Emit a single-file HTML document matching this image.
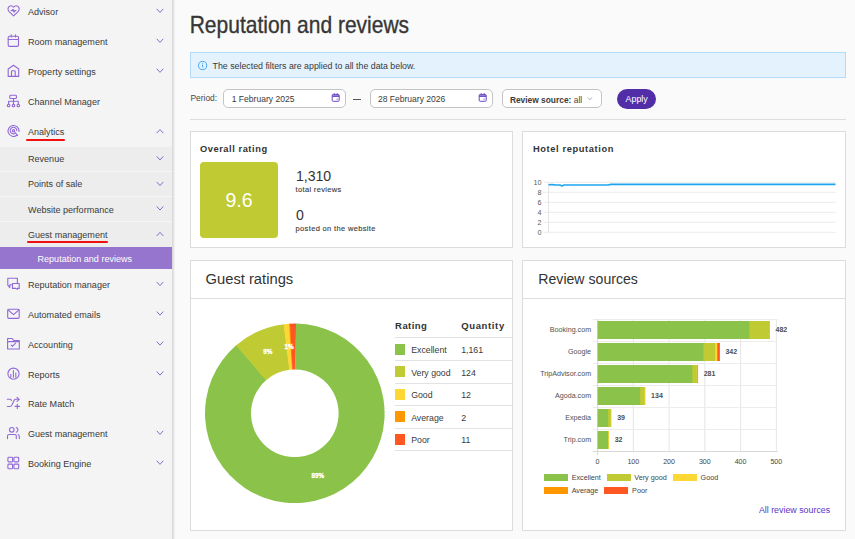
<!DOCTYPE html>
<html><head><meta charset="utf-8">
<style>
*{box-sizing:border-box;margin:0;padding:0}
html,body{width:855px;height:539px;overflow:hidden;background:#fafafa;font-family:"Liberation Sans",sans-serif}
.a{position:absolute}
.t{position:absolute;white-space:pre}
svg{overflow:visible}
text{font-family:"Liberation Sans",sans-serif;white-space:pre}
</style></head><body>
<div class="a" style="left:0px;top:0px;width:172px;height:539px;background:#f4f4f4;"></div>
<div class="a" style="left:172px;top:0px;width:3px;height:539px;background:linear-gradient(to right,#d4d4d4,#e8e8e8 60%,#f6f6f6);"></div>
<div class="a" style="left:0px;top:147px;width:172px;height:100px;background:#ededed;"></div>
<div class="a" style="left:0px;top:171px;width:172px;height:1px;background:#f6f6f6;"></div>
<div class="a" style="left:0px;top:196px;width:172px;height:1px;background:#f6f6f6;"></div>
<div class="a" style="left:0px;top:221px;width:172px;height:1px;background:#f6f6f6;"></div>
<div class="a" style="left:0px;top:247px;width:172px;height:22px;background:#9575cd;"></div>
<svg class="a" style="left:0;top:0" width="172" height="539" fill="none" stroke="#9068d8" stroke-width="1.1" stroke-linecap="round" stroke-linejoin="round">
<path d="M13.6 15.9 L9.1 11.6 C7.7 10.2 7.6 7.9 9 6.6 C10.4 5.5 12.4 5.7 13.6 7.1 C14.8 5.7 16.8 5.5 18.2 6.6 C19.6 7.9 19.5 10.2 18.1 11.6 Z"/>
<path d="M11.2 10.6 H12.3 L13.1 9.4 L14 12.1 L14.8 10.6 H15.9" stroke-width="1.2"/>
<rect x="8.2" y="36.3" width="10.3" height="10.1" rx="1.3"/><path d="M8.2 39.5 H18.5 M11.2 34.8 V37 M15.5 34.8 V37"/>
<path d="M8.2 76.4 V69 L13.5 65.3 L18.7 69 V76.4 Z"/><path d="M11.5 76.4 V71.6 Q11.5 70.7 12.4 70.7 H14.3 Q15.2 70.7 15.2 71.6 V76.4"/>
<rect x="9.8" y="95.3" width="6.6" height="3.2" rx="0.8"/><path d="M13.5 98.5 V101.3 M8.6 104.2 V101.3 H18.3 V104.2 M13.5 101.3 V104.2"/>
<circle cx="8.6" cy="105.5" r="1.3"/><circle cx="13.5" cy="105.5" r="1.3"/><circle cx="18.3" cy="105.5" r="1.3"/>
<path d="M16.9 135.3 A5.5 5.5 0 1 1 19 131.5"/><path d="M14.8 133.6 A3.3 3.3 0 1 1 16.8 130.6"/><circle cx="13.5" cy="130.7" r="1.1"/><path d="M14.2 131.5 L17.6 135.3"/>
<path d="M7.8 278.3 H17.4 V283.4 M11.9 284.7 H9.8 V287.6 L7.8 285.2 V278.3"/>
<path d="M12.5 283.5 H19.2 V288.4 H17.4 V289.4 L15.9 288.4 H12.5 Z"/>
<rect x="7.7" y="309.3" width="11.5" height="9.1" rx="1.2"/><path d="M8 309.8 L13.5 314.6 L19 309.8"/>
<path d="M7.6 349 V338.5 H12.2 L13.6 340.5 H19.3 V349 Z M7.6 341.6 H19.3"/><path d="M11.2 345.1 L12.4 346.4 L15.6 343.2"/>
<circle cx="13.5" cy="373.7" r="5.6"/><path d="M10.8 374.4 V377.2 M13.4 370.6 V377.2 M15.8 373 V377.2"/>
<path d="M7.3 399.3 H10 Q10.9 399.3 11.5 400.4 M7.3 406.5 H10 Q11.1 406.5 11.9 405 L14.1 400.4 Q14.6 399.3 15.6 399.3 H19.2 M17 397.3 L19.2 399.3 L17 401.3"/><path d="M17.3 404.2 V408.6 M15.1 406.4 H19.5"/>
<circle cx="11.8" cy="429.8" r="2.3"/><path d="M7.5 438.6 V436 Q7.5 434.5 9 434.5 H14.8 Q16.3 434.5 16.3 436 V438.6 M16.3 427.5 A2.5 2.5 0 0 1 16.3 432.2 M18.1 434.4 Q19.3 435.3 19.3 436.5 V438.6"/>
<rect x="7.9" y="457.3" width="4.7" height="4.6" rx="0.9"/><rect x="13.9" y="457.3" width="4.8" height="4.6" rx="0.9"/><rect x="7.9" y="464.1" width="4.7" height="4.7" rx="0.9"/><rect x="13.9" y="464.1" width="4.8" height="4.7" rx="0.9"/>
</svg>
<div class="a" style="left:25.5px;top:138.5px;width:39px;height:2px;background:#f01010;border-radius:1px"></div>
<div class="a" style="left:26.7px;top:240.8px;width:81.7px;height:2px;background:#f01010;border-radius:1px"></div>
<svg class="a" style="left:0;top:0" width="172" height="539"><path d="M157.0 9.15 L160 12.450000000000001 L163.0 9.15" fill="none" stroke="#8a68d0" stroke-width="1.0" stroke-linecap="round" stroke-linejoin="round"/><path d="M157.0 39.15 L160 42.449999999999996 L163.0 39.15" fill="none" stroke="#8a68d0" stroke-width="1.0" stroke-linecap="round" stroke-linejoin="round"/><path d="M157.0 69.05 L160 72.35000000000001 L163.0 69.05" fill="none" stroke="#8a68d0" stroke-width="1.0" stroke-linecap="round" stroke-linejoin="round"/><path d="M157.0 132.85 L160 129.54999999999998 L163.0 132.85" fill="none" stroke="#8a68d0" stroke-width="1.0" stroke-linecap="round" stroke-linejoin="round"/><path d="M157.0 156.65 L160 159.95000000000002 L163.0 156.65" fill="none" stroke="#8a68d0" stroke-width="1.0" stroke-linecap="round" stroke-linejoin="round"/><path d="M157.0 182.25 L160 185.55 L163.0 182.25" fill="none" stroke="#8a68d0" stroke-width="1.0" stroke-linecap="round" stroke-linejoin="round"/><path d="M157.0 206.75 L160 210.05 L163.0 206.75" fill="none" stroke="#8a68d0" stroke-width="1.0" stroke-linecap="round" stroke-linejoin="round"/><path d="M157.0 235.65 L160 232.35 L163.0 235.65" fill="none" stroke="#8a68d0" stroke-width="1.0" stroke-linecap="round" stroke-linejoin="round"/><path d="M157.0 282.25 L160 285.54999999999995 L163.0 282.25" fill="none" stroke="#8a68d0" stroke-width="1.0" stroke-linecap="round" stroke-linejoin="round"/><path d="M157.0 311.85 L160 315.15 L163.0 311.85" fill="none" stroke="#8a68d0" stroke-width="1.0" stroke-linecap="round" stroke-linejoin="round"/><path d="M157.0 341.85 L160 345.15 L163.0 341.85" fill="none" stroke="#8a68d0" stroke-width="1.0" stroke-linecap="round" stroke-linejoin="round"/><path d="M157.0 371.85 L160 375.15 L163.0 371.85" fill="none" stroke="#8a68d0" stroke-width="1.0" stroke-linecap="round" stroke-linejoin="round"/><path d="M157.0 431.15000000000003 L160 434.45 L163.0 431.15000000000003" fill="none" stroke="#8a68d0" stroke-width="1.0" stroke-linecap="round" stroke-linejoin="round"/><path d="M157.0 461.05 L160 464.34999999999997 L163.0 461.05" fill="none" stroke="#8a68d0" stroke-width="1.0" stroke-linecap="round" stroke-linejoin="round"/></svg>
<div class="a" style="left:190px;top:52px;width:656px;height:26px;background:#e3f2fd;border:1px solid #b3dbf7;"></div>
<svg class="a" style="left:197px;top:60px" width="11" height="11" viewBox="0 0 11 11"><circle cx="5.6" cy="5.5" r="4.1" fill="none" stroke="#45a6f3" stroke-width="1"/><path d="M5.6 4.6v2.8" stroke="#45a6f3" stroke-width="1"/><circle cx="5.6" cy="3.3" r=".5" fill="#45a6f3"/></svg>
<div class="a" style="left:223px;top:89px;width:123px;height:19px;background:#fff;border:1px solid #c4c4c4;border-radius:5px;"></div>
<div class="a" style="left:370px;top:89px;width:123px;height:19px;background:#fff;border:1px solid #c4c4c4;border-radius:5px;"></div>
<svg class="a" style="left:331.2px;top:93.2px" width="9" height="9" viewBox="0 0 9 9" fill="none" stroke="#6240c0" stroke-width="0.95"><rect x="1.2" y="1.4" width="7" height="6.9" rx="1"/><path d="M1.2 3.1h7" stroke-width="1.6"/><path d="M3.2 .2v1.6M6.2 .2v1.6" stroke-width="0.9"/><circle cx="6.1" cy="6.1" r=".6" fill="#6240c0" stroke="none"/></svg>
<svg class="a" style="left:478.2px;top:93.2px" width="9" height="9" viewBox="0 0 9 9" fill="none" stroke="#6240c0" stroke-width="0.95"><rect x="1.2" y="1.4" width="7" height="6.9" rx="1"/><path d="M1.2 3.1h7" stroke-width="1.6"/><path d="M3.2 .2v1.6M6.2 .2v1.6" stroke-width="0.9"/><circle cx="6.1" cy="6.1" r=".6" fill="#6240c0" stroke="none"/></svg>
<div class="a" style="left:353px;top:98.5px;width:8px;height:1px;background:#555;"></div>
<div class="a" style="left:502px;top:89px;width:100px;height:19px;background:#fff;border:1px solid #c4c4c4;border-radius:5px;"></div>
<svg class="a" style="left:586px;top:96px" width="8" height="5" viewBox="0 0 8 5"><path d="M1.6 1.5 L3.9 3.6 L6.2 1.5" fill="none" stroke="#a0a0a0" stroke-width="0.85"/></svg>
<div class="a" style="left:617px;top:89px;width:39px;height:20px;background:#512da8;border-radius:10px;"></div>
<div class="a" style="left:190px;top:119px;width:656px;height:1px;background:#dedede;"></div>
<div class="a" style="left:190px;top:131px;width:323px;height:117px;background:#fff;border:1px solid #dcdcdc;"></div>
<div class="a" style="left:522px;top:131px;width:324px;height:117px;background:#fff;border:1px solid #dcdcdc;"></div>
<div class="a" style="left:190px;top:260px;width:323px;height:271px;background:#fff;border:1px solid #dcdcdc;"></div>
<div class="a" style="left:522px;top:260px;width:324px;height:271px;background:#fff;border:1px solid #dcdcdc;"></div>
<div class="a" style="left:200px;top:162px;width:78px;height:76px;background:#c0ca33;border-radius:4px;"></div>
<svg class="a" style="left:522px;top:131px" width="324" height="117"><path d="M21.5 51.30000000000001 H313.5" stroke="#ebebeb" stroke-width="1"/><path d="M21.5 61.30000000000001 H313.5" stroke="#ebebeb" stroke-width="1"/><path d="M21.5 71.30000000000001 H313.5" stroke="#ebebeb" stroke-width="1"/><path d="M21.5 81.30000000000001 H313.5" stroke="#ebebeb" stroke-width="1"/><path d="M21.5 91.30000000000001 H313.5" stroke="#ebebeb" stroke-width="1"/><path d="M21.5 101.30000000000001 H313.5" stroke="#ebebeb" stroke-width="1"/><path d="M26.5 51.30000000000001 V101.80000000000001" stroke="#e4e4e4" stroke-width="1"/><path d="M26.5 53.80000000000001 L30 53.599999999999994 L34 54.0 L38 54.0 L40 54.900000000000006 L42 54.0 L86 54.0 L89 53.400000000000006 L313.5 53.400000000000006" fill="none" stroke="#1fa5ef" stroke-width="1.6" stroke-linejoin="round"/></svg>
<div class="a" style="left:191px;top:298px;width:321px;height:1px;background:#dedede;"></div>
<div class="a" style="left:523px;top:298px;width:322px;height:1px;background:#dedede;"></div>
<svg class="a" style="left:190px;top:260px" width="323" height="271"><path d="M106.05 63.51 A89.8 89.8 0 1 1 46.48 85.02 L76.35 119.99 A43.8 43.8 0 1 0 105.41 109.50Z" fill="#8bc34a"/><path d="M46.00 85.42 A89.8 89.8 0 0 1 94.17 64.13 L99.61 109.81 A43.8 43.8 0 0 0 76.12 120.19Z" fill="#c0ca33"/><path d="M93.55 64.21 A89.8 89.8 0 0 1 99.63 63.65 L102.28 109.57 A43.8 43.8 0 0 0 99.31 109.85Z" fill="#fdd835"/><path d="M99.00 63.69 A89.8 89.8 0 0 1 100.57 63.60 L102.74 109.55 A43.8 43.8 0 0 0 101.97 109.59Z" fill="#ff9800"/><path d="M99.94 63.63 A89.8 89.8 0 0 1 106.05 63.51 L105.41 109.50 A43.8 43.8 0 0 0 102.43 109.56Z" fill="#ff5722"/></svg>
<div class="a" style="left:394.8px;top:337.2px;width:117.2px;height:1px;background:#e2e2e2;"></div>
<div class="a" style="left:394.8px;top:360.1px;width:117.2px;height:1px;background:#e2e2e2;"></div>
<div class="a" style="left:394.8px;top:382.6px;width:117.2px;height:1px;background:#e2e2e2;"></div>
<div class="a" style="left:394.8px;top:405.0px;width:117.2px;height:1px;background:#e2e2e2;"></div>
<div class="a" style="left:394.8px;top:427.7px;width:117.2px;height:1px;background:#e2e2e2;"></div>
<div class="a" style="left:394.8px;top:450.1px;width:117.2px;height:1px;background:#e2e2e2;"></div>
<div class="a" style="left:395px;top:344px;width:10px;height:11px;background:#8bc34a;"></div>
<div class="a" style="left:395px;top:366px;width:10px;height:11px;background:#c0ca33;"></div>
<div class="a" style="left:395px;top:389px;width:10px;height:11px;background:#fdd835;"></div>
<div class="a" style="left:395px;top:411px;width:10px;height:11px;background:#ff9800;"></div>
<div class="a" style="left:395px;top:434px;width:10px;height:11px;background:#ff5722;"></div>
<svg class="a" style="left:522px;top:260px" width="324" height="271"><path d="M111.35 59.5 V191.5" stroke="#e6e6e6" stroke-width="1"/><path d="M147.10 59.5 V191.5" stroke="#e6e6e6" stroke-width="1"/><path d="M182.85 59.5 V191.5" stroke="#e6e6e6" stroke-width="1"/><path d="M218.60 59.5 V191.5" stroke="#e6e6e6" stroke-width="1"/><path d="M254.35 59.5 V191.5" stroke="#e6e6e6" stroke-width="1"/><path d="M70.79999999999995 59.50 H255.5" stroke="#ececec" stroke-width="1"/><path d="M70.79999999999995 81.50 H255.5" stroke="#ececec" stroke-width="1"/><path d="M70.79999999999995 103.50 H255.5" stroke="#ececec" stroke-width="1"/><path d="M70.79999999999995 125.50 H255.5" stroke="#ececec" stroke-width="1"/><path d="M70.79999999999995 147.50 H255.5" stroke="#ececec" stroke-width="1"/><path d="M70.79999999999995 169.50 H255.5" stroke="#ececec" stroke-width="1"/><path d="M70.79999999999995 191.50 H255.5" stroke="#ececec" stroke-width="1"/><path d="M70.79999999999995 191.5 H255.5" stroke="#d8d8d8" stroke-width="1"/><path d="M75.60000000000002 59.5 V195" stroke="#d8d8d8" stroke-width="1"/><rect x="226.39" y="61.00" width="21.52" height="18.0" fill="#c0ca33"/><rect x="75.60" y="61.00" width="151.79" height="18.0" fill="#8bc34a"/><rect x="194.72" y="83.00" width="3.14" height="18.0" fill="#ff5722"/><rect x="194.00" y="83.00" width="1.72" height="18.0" fill="#ff9800"/><rect x="192.22" y="83.00" width="2.79" height="18.0" fill="#fdd835"/><rect x="180.42" y="83.00" width="12.80" height="18.0" fill="#c0ca33"/><rect x="75.60" y="83.00" width="105.82" height="18.0" fill="#8bc34a"/><rect x="174.52" y="105.00" width="1.54" height="18.0" fill="#ff5722"/><rect x="173.81" y="105.00" width="1.72" height="18.0" fill="#fdd835"/><rect x="169.34" y="105.00" width="5.47" height="18.0" fill="#c0ca33"/><rect x="75.60" y="105.00" width="94.74" height="18.0" fill="#8bc34a"/><rect x="121.61" y="127.00" width="1.89" height="18.0" fill="#fdd835"/><rect x="117.14" y="127.00" width="5.47" height="18.0" fill="#c0ca33"/><rect x="75.60" y="127.00" width="42.54" height="18.0" fill="#8bc34a"/><rect x="87.83" y="149.00" width="1.71" height="18.0" fill="#fdd835"/><rect x="85.15" y="149.00" width="3.68" height="18.0" fill="#c0ca33"/><rect x="75.60" y="149.00" width="10.55" height="18.0" fill="#8bc34a"/><rect x="85.25" y="171.00" width="1.79" height="18.0" fill="#fdd835"/><rect x="75.60" y="171.00" width="10.65" height="18.0" fill="#8bc34a"/></svg>
<div class="a" style="left:543.9px;top:474.3px;width:24px;height:7.2px;background:#8bc34a;"></div>
<div class="a" style="left:606.8px;top:474.3px;width:24px;height:7.2px;background:#c0ca33;"></div>
<div class="a" style="left:672.8px;top:474.3px;width:24px;height:7.2px;background:#fdd835;"></div>
<div class="a" style="left:543.9px;top:487.2px;width:24px;height:7.2px;background:#ff9800;"></div>
<div class="a" style="left:604.3px;top:487.2px;width:24px;height:7.2px;background:#ff5722;"></div>
<svg class="a" style="left:0;top:0" width="855" height="539">
<text x="28.00" y="15.20" font-size="9.05" fill="#3a3a3a" style="">Advisor</text>
<text x="28.00" y="44.80" font-size="9.05" fill="#3a3a3a" style="">Room management</text>
<text x="28.00" y="74.50" font-size="9.05" fill="#3a3a3a" style="">Property settings</text>
<text x="28.00" y="104.60" font-size="9.05" fill="#3a3a3a" style="">Channel Manager</text>
<text x="28.00" y="134.90" font-size="9.05" fill="#3a3a3a" style="">Analytics</text>
<text x="28.00" y="288.10" font-size="9.05" fill="#3a3a3a" style="">Reputation manager</text>
<text x="28.00" y="318.30" font-size="9.05" fill="#3a3a3a" style="">Automated emails</text>
<text x="28.00" y="348.40" font-size="9.05" fill="#3a3a3a" style="">Accounting</text>
<text x="28.00" y="378.10" font-size="9.05" fill="#3a3a3a" style="">Reports</text>
<text x="28.00" y="406.90" font-size="9.05" fill="#3a3a3a" style="">Rate Match</text>
<text x="28.00" y="436.80" font-size="9.05" fill="#3a3a3a" style="">Guest management</text>
<text x="28.00" y="467.00" font-size="9.05" fill="#3a3a3a" style="">Booking Engine</text>
<text x="28.00" y="161.70" font-size="9.05" fill="#3a3a3a" style="">Revenue</text>
<text x="28.00" y="186.70" font-size="9.05" fill="#3a3a3a" style="">Points of sale</text>
<text x="28.00" y="212.90" font-size="9.05" fill="#3a3a3a" style="">Website performance</text>
<text x="28.00" y="238.00" font-size="9.05" fill="#3a3a3a" style="">Guest management</text>
<text x="37.50" y="261.70" font-size="9.05" fill="#ffffff" style="">Reputation and reviews</text>
<text transform="translate(189.70 0) scale(0.8900 1) translate(-189.70 0)" x="189.70" y="33.10" font-size="23.6" fill="#363636" style="stroke:#363636;stroke-width:0.35px">Reputation and reviews</text>
<text x="212.50" y="68.80" font-size="8.82" fill="#3a3a3a" style="">The selected filters are applied to all the data below.</text>
<text x="190.40" y="101.30" font-size="8.46" fill="#484848" style="">Period:</text>
<text x="231.70" y="101.90" font-size="8.55" fill="#3a3a3a" style="">1 February 2025</text>
<text x="377.90" y="101.60" font-size="8.55" fill="#3a3a3a" style="">28 February 2026</text>
<text x="509.90" y="102.90" font-size="8.4" fill="#3a3a3a" font-weight="700" style="">Review source:</text>
<text x="573.80" y="102.90" font-size="8.4" fill="#444" style="">all</text>
<text x="625.60" y="101.90" font-size="8.83" fill="#fff" style="">Apply</text>
<text x="199.90" y="152.00" font-size="9.3" fill="#333" font-weight="700" style=";letter-spacing:0.557px">Overall rating</text>
<text x="239.00" y="207.10" font-size="19.5" fill="#fff" text-anchor="middle" style="">9.6</text>
<text x="295.90" y="180.50" font-size="14.1" fill="#333" style="">1,310</text>
<text x="295.60" y="191.90" font-size="7.5" fill="#3c3c3c" style="stroke:#3c3c3c;stroke-width:0.12px;letter-spacing:0.326px">total reviews</text>
<text x="295.90" y="219.60" font-size="14.1" fill="#333" style="">0</text>
<text x="295.60" y="230.50" font-size="7.5" fill="#3c3c3c" style="stroke:#3c3c3c;stroke-width:0.12px;letter-spacing:0.342px">posted on the website</text>
<text x="533.00" y="151.90" font-size="9.3" fill="#333" font-weight="700" style=";letter-spacing:0.613px">Hotel reputation</text>
<text x="541.60" y="184.90" font-size="7.2" fill="#5a5a5a" text-anchor="end" style="">10</text>
<text x="541.60" y="194.90" font-size="7.2" fill="#5a5a5a" text-anchor="end" style="">8</text>
<text x="541.60" y="204.90" font-size="7.2" fill="#5a5a5a" text-anchor="end" style="">6</text>
<text x="541.60" y="214.90" font-size="7.2" fill="#5a5a5a" text-anchor="end" style="">4</text>
<text x="541.60" y="224.90" font-size="7.2" fill="#5a5a5a" text-anchor="end" style="">2</text>
<text x="541.60" y="234.90" font-size="7.2" fill="#5a5a5a" text-anchor="end" style="">0</text>
<text x="205.50" y="283.80" font-size="14.75" fill="#333" style="">Guest ratings</text>
<text x="538.30" y="283.80" font-size="14.12" fill="#333" style="">Review sources</text>
<text x="317.80" y="477.80" font-size="6.3" fill="#fff" font-weight="700" text-anchor="middle" style="stroke:#fff;stroke-width:0.35px">89%</text>
<text x="267.90" y="354.20" font-size="6.3" fill="#fff" font-weight="700" text-anchor="middle" style="stroke:#fff;stroke-width:0.35px">9%</text>
<text x="289.00" y="349.20" font-size="6.3" fill="#fff" font-weight="700" text-anchor="middle" style="stroke:#fff;stroke-width:0.35px">1%</text>
<text x="395.10" y="329.20" font-size="9.5" fill="#333" font-weight="700" style=";letter-spacing:0.429px">Rating</text>
<text x="461.20" y="329.20" font-size="9.5" fill="#333" font-weight="700" style=";letter-spacing:0.639px">Quantity</text>
<text x="411.20" y="353.15" font-size="8.75" fill="#3a3a3a" style="">Excellent</text>
<text x="461.20" y="353.15" font-size="8.75" fill="#3a3a3a" style="">1,161</text>
<text x="411.20" y="375.85" font-size="8.75" fill="#3a3a3a" style="">Very good</text>
<text x="461.20" y="375.85" font-size="8.75" fill="#3a3a3a" style="">124</text>
<text x="411.20" y="398.30" font-size="8.75" fill="#3a3a3a" style="">Good</text>
<text x="461.20" y="398.30" font-size="8.75" fill="#3a3a3a" style="">12</text>
<text x="411.20" y="420.85" font-size="8.75" fill="#3a3a3a" style="">Average</text>
<text x="461.20" y="420.85" font-size="8.75" fill="#3a3a3a" style="">2</text>
<text x="411.20" y="443.40" font-size="8.75" fill="#3a3a3a" style="">Poor</text>
<text x="461.20" y="443.40" font-size="8.75" fill="#3a3a3a" style="">11</text>
<text x="591.10" y="332.30" font-size="7.15" fill="#505050" text-anchor="end" style="">Booking.com</text>
<text x="775.51" y="332.30" font-size="7.0" fill="#4d4d4d" font-weight="700" style="">482</text>
<text x="591.10" y="354.30" font-size="7.15" fill="#505050" text-anchor="end" style="">Google</text>
<text x="725.47" y="354.30" font-size="7.0" fill="#4d4d4d" font-weight="700" style="">342</text>
<text x="591.10" y="376.30" font-size="7.15" fill="#505050" text-anchor="end" style="">TripAdvisor.com</text>
<text x="703.66" y="376.30" font-size="7.0" fill="#4d4d4d" font-weight="700" style="">281</text>
<text x="591.10" y="398.30" font-size="7.15" fill="#505050" text-anchor="end" style="">Agoda.com</text>
<text x="651.11" y="398.30" font-size="7.0" fill="#4d4d4d" font-weight="700" style="">134</text>
<text x="591.10" y="420.30" font-size="7.15" fill="#505050" text-anchor="end" style="">Expedia</text>
<text x="617.14" y="420.30" font-size="7.0" fill="#4d4d4d" font-weight="700" style="">39</text>
<text x="591.10" y="442.30" font-size="7.15" fill="#505050" text-anchor="end" style="">Trip.com</text>
<text x="614.64" y="442.30" font-size="7.0" fill="#4d4d4d" font-weight="700" style="">32</text>
<text x="597.60" y="463.70" font-size="7.1" fill="#444" text-anchor="middle" style="">0</text>
<text x="633.35" y="463.70" font-size="7.1" fill="#444" text-anchor="middle" style="">100</text>
<text x="669.10" y="463.70" font-size="7.1" fill="#444" text-anchor="middle" style="">200</text>
<text x="704.85" y="463.70" font-size="7.1" fill="#444" text-anchor="middle" style="">300</text>
<text x="740.60" y="463.70" font-size="7.1" fill="#444" text-anchor="middle" style="">400</text>
<text x="776.35" y="463.70" font-size="7.1" fill="#444" text-anchor="middle" style="">500</text>
<text x="571.70" y="480.30" font-size="7.2" fill="#444" style="">Excellent</text>
<text x="634.30" y="480.30" font-size="7.2" fill="#444" style="">Very good</text>
<text x="700.60" y="480.30" font-size="7.2" fill="#444" style="">Good</text>
<text x="571.70" y="493.20" font-size="7.2" fill="#444" style="">Average</text>
<text x="632.10" y="493.20" font-size="7.2" fill="#444" style="">Poor</text>
<text x="758.90" y="512.80" font-size="8.85" fill="#5a36c8" style="">All review sources</text>
</svg>
</body></html>
